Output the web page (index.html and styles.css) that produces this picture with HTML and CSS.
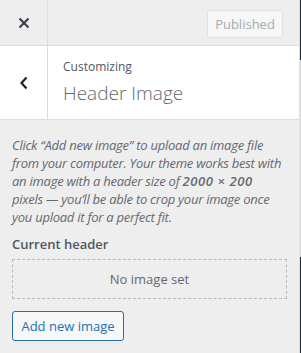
FILE: index.html
```html
<!DOCTYPE html>
<html>
<head>
<meta charset="utf-8">
<link rel="stylesheet" href="styles.css">
</head>
<body>
<div class="sidebar">
  <div class="header">
    <div class="close">
      <svg width="12" height="12" viewBox="0 0 12 12"><path d="M1.5 1.5 L10.5 10.5 M10.5 1.5 L1.5 10.5" stroke="#3c434a" stroke-width="2.2" fill="none"/></svg>
    </div>
    <div class="header-right">
      <button class="published">Published</button>
    </div>
  </div>
  <div class="section-title">
    <div class="back">
      <svg width="10" height="14" viewBox="0 0 10 14"><path d="M7.5 1.5 L2.5 7 L7.5 12.5" stroke="#1d2327" stroke-width="2.2" fill="none"/></svg>
    </div>
    <div class="titles">
      <div class="customizing">Customizing</div>
      <div class="heading">Header Image</div>
    </div>
  </div>
  <div class="content">
    <p class="desc">Click “Add new image” to upload an image file from your computer. Your theme works best with an image with a header size of <strong>2000 × 200</strong> pixels — you’ll be able to crop your image once you upload it for a perfect fit.</p>
    <div class="label">Current header</div>
    <div class="placeholder">No image set</div>
    <button class="add">Add new image</button>
  </div>
</div>
<div class="edge">
  <div class="dark top"></div>
  <div class="dark bottom"></div>
</div>
</body>
</html>
```
FILE: styles.css
```css
html, body {
  margin: 0;
  padding: 0;
}
body {
  width: 301px;
  height: 353px;
  overflow: hidden;
  display: flex;
  background: #eeeeee;
  font-family: "Open Sans", "Noto Sans", sans-serif;
  color: #50575e;
}
.sidebar {
  width: 299px;
  border-right: 1px solid #dddddd;
  display: flex;
  flex-direction: column;
}
.edge {
  width: 1px;
  display: flex;
  flex-direction: column;
  justify-content: space-between;
  background: #dddddd;
}
.dark { background: #1d2a38; }
.dark.top { height: 60px; }
.dark.bottom { height: 96px; }
.header {
  height: 45px;
  border-bottom: 1px solid #dddddd;
  display: flex;
}
.close {
  width: 47px;
  border-right: 1px solid #dddddd;
  display: flex;
  align-items: center;
  justify-content: center;
}
.header-right {
  flex: 1;
  display: flex;
  justify-content: flex-end;
  align-items: flex-start;
  padding: 10px 16px 0 0;
}
.published {
  width: 76px;
  height: 28px;
  box-sizing: border-box;
  border: 1px solid #e2e2e2;
  border-radius: 3px;
  background: #f6f7f7;
  color: #a7aaad;
  font-family: inherit;
  font-size: 13px;
  padding: 0;
}
.section-title {
  height: 73px;
  background: #ffffff;
  border-bottom: 1px solid #dddddd;
  display: flex;
}
.back {
  width: 47px;
  border-right: 1px solid #dddddd;
  display: flex;
  align-items: center;
  justify-content: center;
}
.titles {
  padding: 13px 0 0 15px;
}
.customizing {
  font-size: 12px;
  line-height: 16px;
  color: #50575e;
}
.heading {
  font-size: 19px;
  font-weight: 300;
  line-height: 28px;
  color: #646970;
  margin-top: 4px;
}
.content {
  padding: 16px 12px 0 12px;
}
.desc {
  margin: 0 1px 0 0;
  font-size: 13px;
  letter-spacing: -0.25px;
  line-height: 18px;
  font-style: italic;
  color: #646970;
}
.desc strong {
  font-weight: 600;
  letter-spacing: 0.6px;
}
.label {
  margin-top: 8px;
  font-size: 13px;
  line-height: 20px;
  font-weight: 600;
  color: #50575e;
}
.placeholder {
  margin-top: 5px;
  height: 40px;
  box-sizing: border-box;
  border: 1px dashed #b4b9be;
  display: flex;
  align-items: center;
  justify-content: center;
  font-size: 13px;
  color: #646970;
}
.add {
  display: block;
  margin-top: 12px;
  height: 30px;
  width: 112px;
  box-sizing: border-box;
  border: 1px solid #2271b1;
  border-radius: 3px;
  background: #f6f7f7;
  color: #2271b1;
  font-family: inherit;
  font-size: 13px;
  padding: 0;
}
```
